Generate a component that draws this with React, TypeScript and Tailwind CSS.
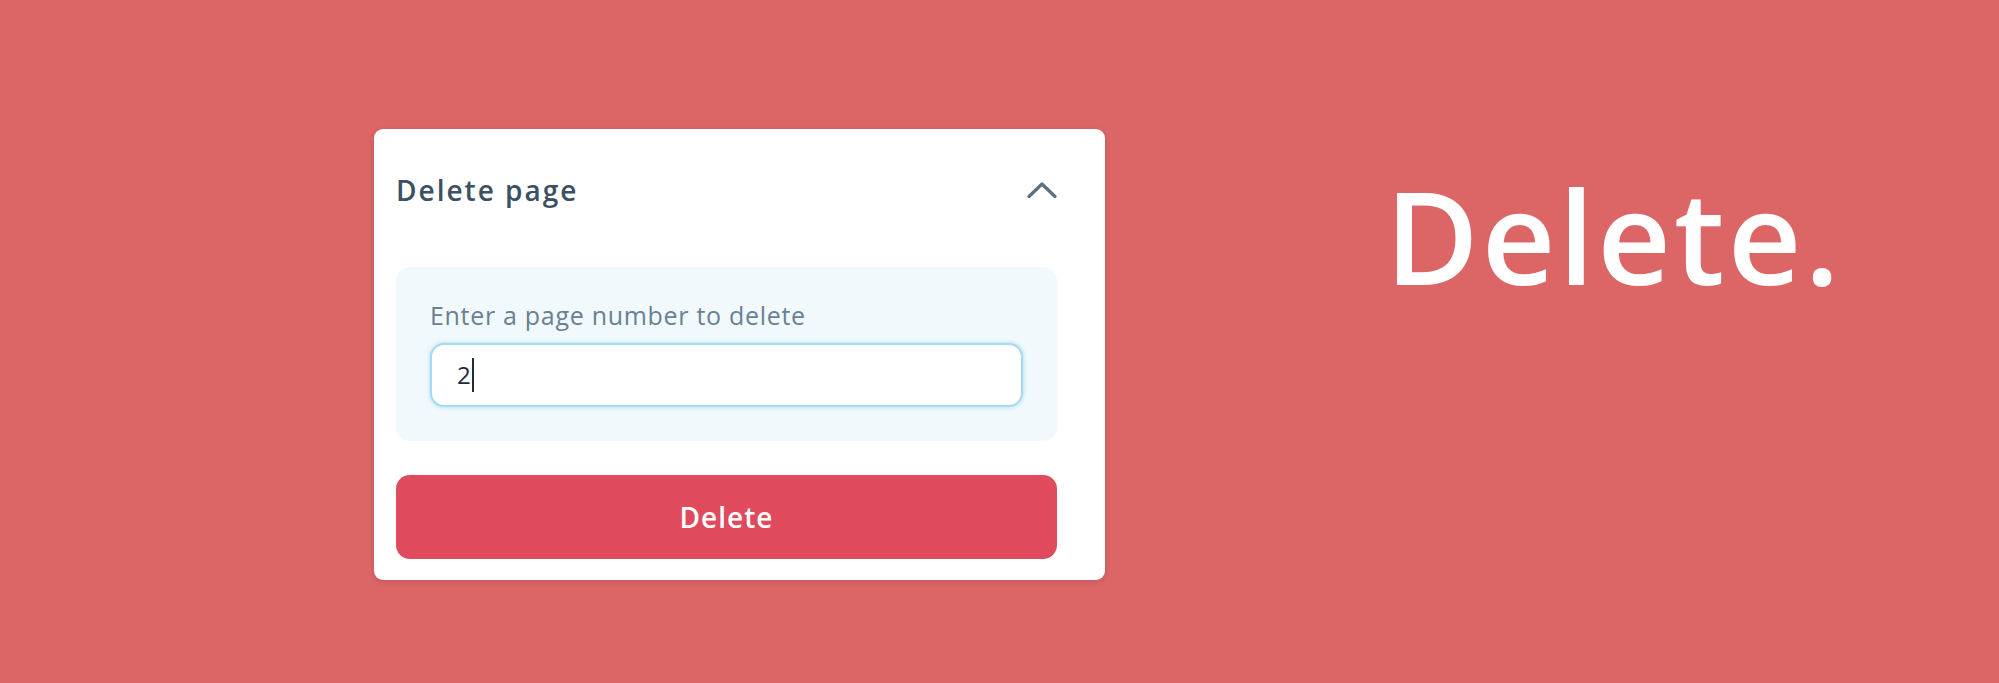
import React from "react";

const ChevronUp: React.FC = () => (
  <svg width="30" height="16" viewBox="0 0 30 16" fill="none">
    <path
      d="M2 14.5 L15 2 L28 14.5"
      stroke="#5b6f84"
      strokeWidth="3.2"
      strokeLinecap="round"
      strokeLinejoin="round"
    />
  </svg>
);

const App: React.FC = () => {
  return (
    <div className="min-h-[683px] w-full bg-[#dc6566] font-['Open_Sans',sans-serif]">
      <div className="flex items-start pt-[129px] pl-[374px]">
        <div className="w-[731px] rounded-[9px] bg-white pl-[22px] pr-[48px] pt-[43px] pb-[21px] shadow-[0_2px_6px_rgba(0,0,0,0.12)]">
          <div className="flex items-center justify-between">
            <h2 className="text-[28px] leading-[36px] font-semibold tracking-[2px] text-[#3b4f65]">
              Delete page
            </h2>
            <ChevronUp />
          </div>

          <div className="mt-[59px] rounded-[14px] bg-[#f1f9fd] px-[34px] pt-[32px] pb-[34px]">
            <label className="block text-[25px] leading-[32px] tracking-[0.7px] text-[#6a8093]">
              Enter a page number to delete
            </label>
            <div className="mt-[12px] flex h-[64px] items-center rounded-[14px] border-2 border-[#a6daee] bg-white pl-[25px] shadow-[0_0_4px_rgba(120,200,235,0.6)]">
              <span className="text-[24px] text-[#1f2937]">2</span>
              <span className="ml-[1px] h-[34px] w-[2px] bg-[#1f2937]" />
            </div>
          </div>

          <button className="mt-[34px] flex h-[84px] w-full items-center justify-center rounded-[14px] bg-[#df4a5c] text-[28px] font-semibold tracking-[1px] text-white">
            Delete
          </button>
        </div>

        <h1 className="ml-[280px] mt-[43px] text-[128px] leading-none font-semibold tracking-[3px] text-white">
          Delete.
        </h1>
      </div>
    </div>
  );
};

export default App;
